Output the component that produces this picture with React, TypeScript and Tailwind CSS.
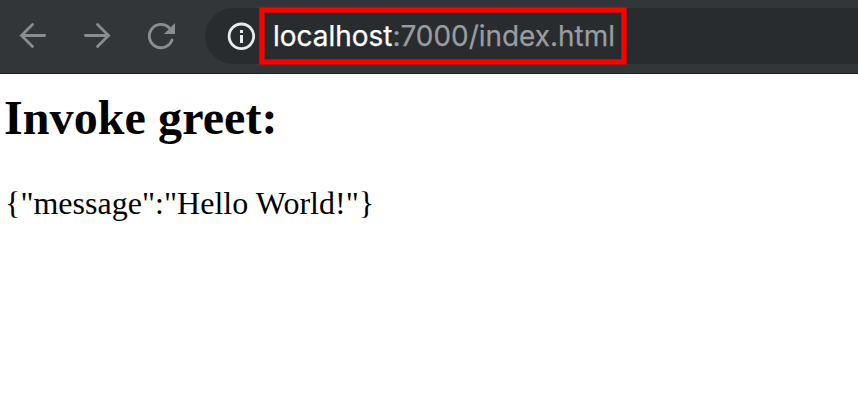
const Arrow = ({ flip = false }: { flip?: boolean }) => (
  <svg width="28" height="28" viewBox="0 0 28 28" fill="none" stroke="#8b8c8d" strokeWidth="2.8" strokeLinecap="round" className={flip ? "-scale-x-100" : ""}>
    <path d="M25.6 13.5H3M13.5 2.4L2.5 13.5l11 11.1" />
  </svg>
);

export default function App() {
  return (
    <div className="h-[420px] w-[858px] overflow-hidden bg-white">
      <header className="flex h-[74px] items-start border-b border-[#1d1e20] bg-[#333639] pt-2">
        <nav className="flex h-14 w-[205px] shrink-0 items-center gap-9 pl-[19px]">
          <Arrow />
          <Arrow flip />
          <svg width="28" height="28" viewBox="0 0 28 28" fill="none">
            <path d="M25 18.1A11.7 11.7 0 1 1 22.2 5.7" stroke="#8b8c8d" strokeWidth="2.9" strokeLinecap="round" />
            <path d="M28 1v11H17z" fill="#8b8c8d" />
          </svg>
        </nav>
        <div className="flex h-14 grow items-center rounded-l-full bg-[#292c2f] pl-[22px]">
          <svg width="28" height="28" viewBox="0 0 28 28" fill="none" stroke="#e8eaed" strokeWidth="2.8">
            <circle cx="14.4" cy="14.3" r="12.3" />
            <path d="M14.5 13V21M14.5 8v3" strokeWidth="3" />
          </svg>
          <div className="-my-px ml-[4px] flex h-[58px] w-[368px] items-center border border-[#a81416] bg-[#fe0000] p-1">
            <div className="flex h-12 w-full items-center border border-[#a81416] bg-[#292c2f] pl-[8px]">
              <svg width="343" height="40" className="shrink-0 overflow-visible">
                <text x="0" y="30" textLength="342" lengthAdjust="spacingAndGlyphs" fill="#9a9da0" stroke="#9a9da0" strokeWidth="0.25" className="font-[Inter,sans-serif] text-[28px]">
                  <tspan fill="#ffffff" stroke="#ffffff">localhost</tspan>:7000/index.html
                </text>
              </svg>
            </div>
          </div>
        </div>
      </header>
      <main className="pl-[4px] pt-[16px] font-['Liberation_Serif',serif] text-black">
        <h2 className="text-[48px] leading-[56px] font-bold tracking-[0.1px]">Invoke greet:</h2>
        <p className="mt-[39px] pl-px text-[32px] leading-[36px] tracking-[0.02px]">{'{"message":"Hello World!"}'}</p>
      </main>
    </div>
  );
}
